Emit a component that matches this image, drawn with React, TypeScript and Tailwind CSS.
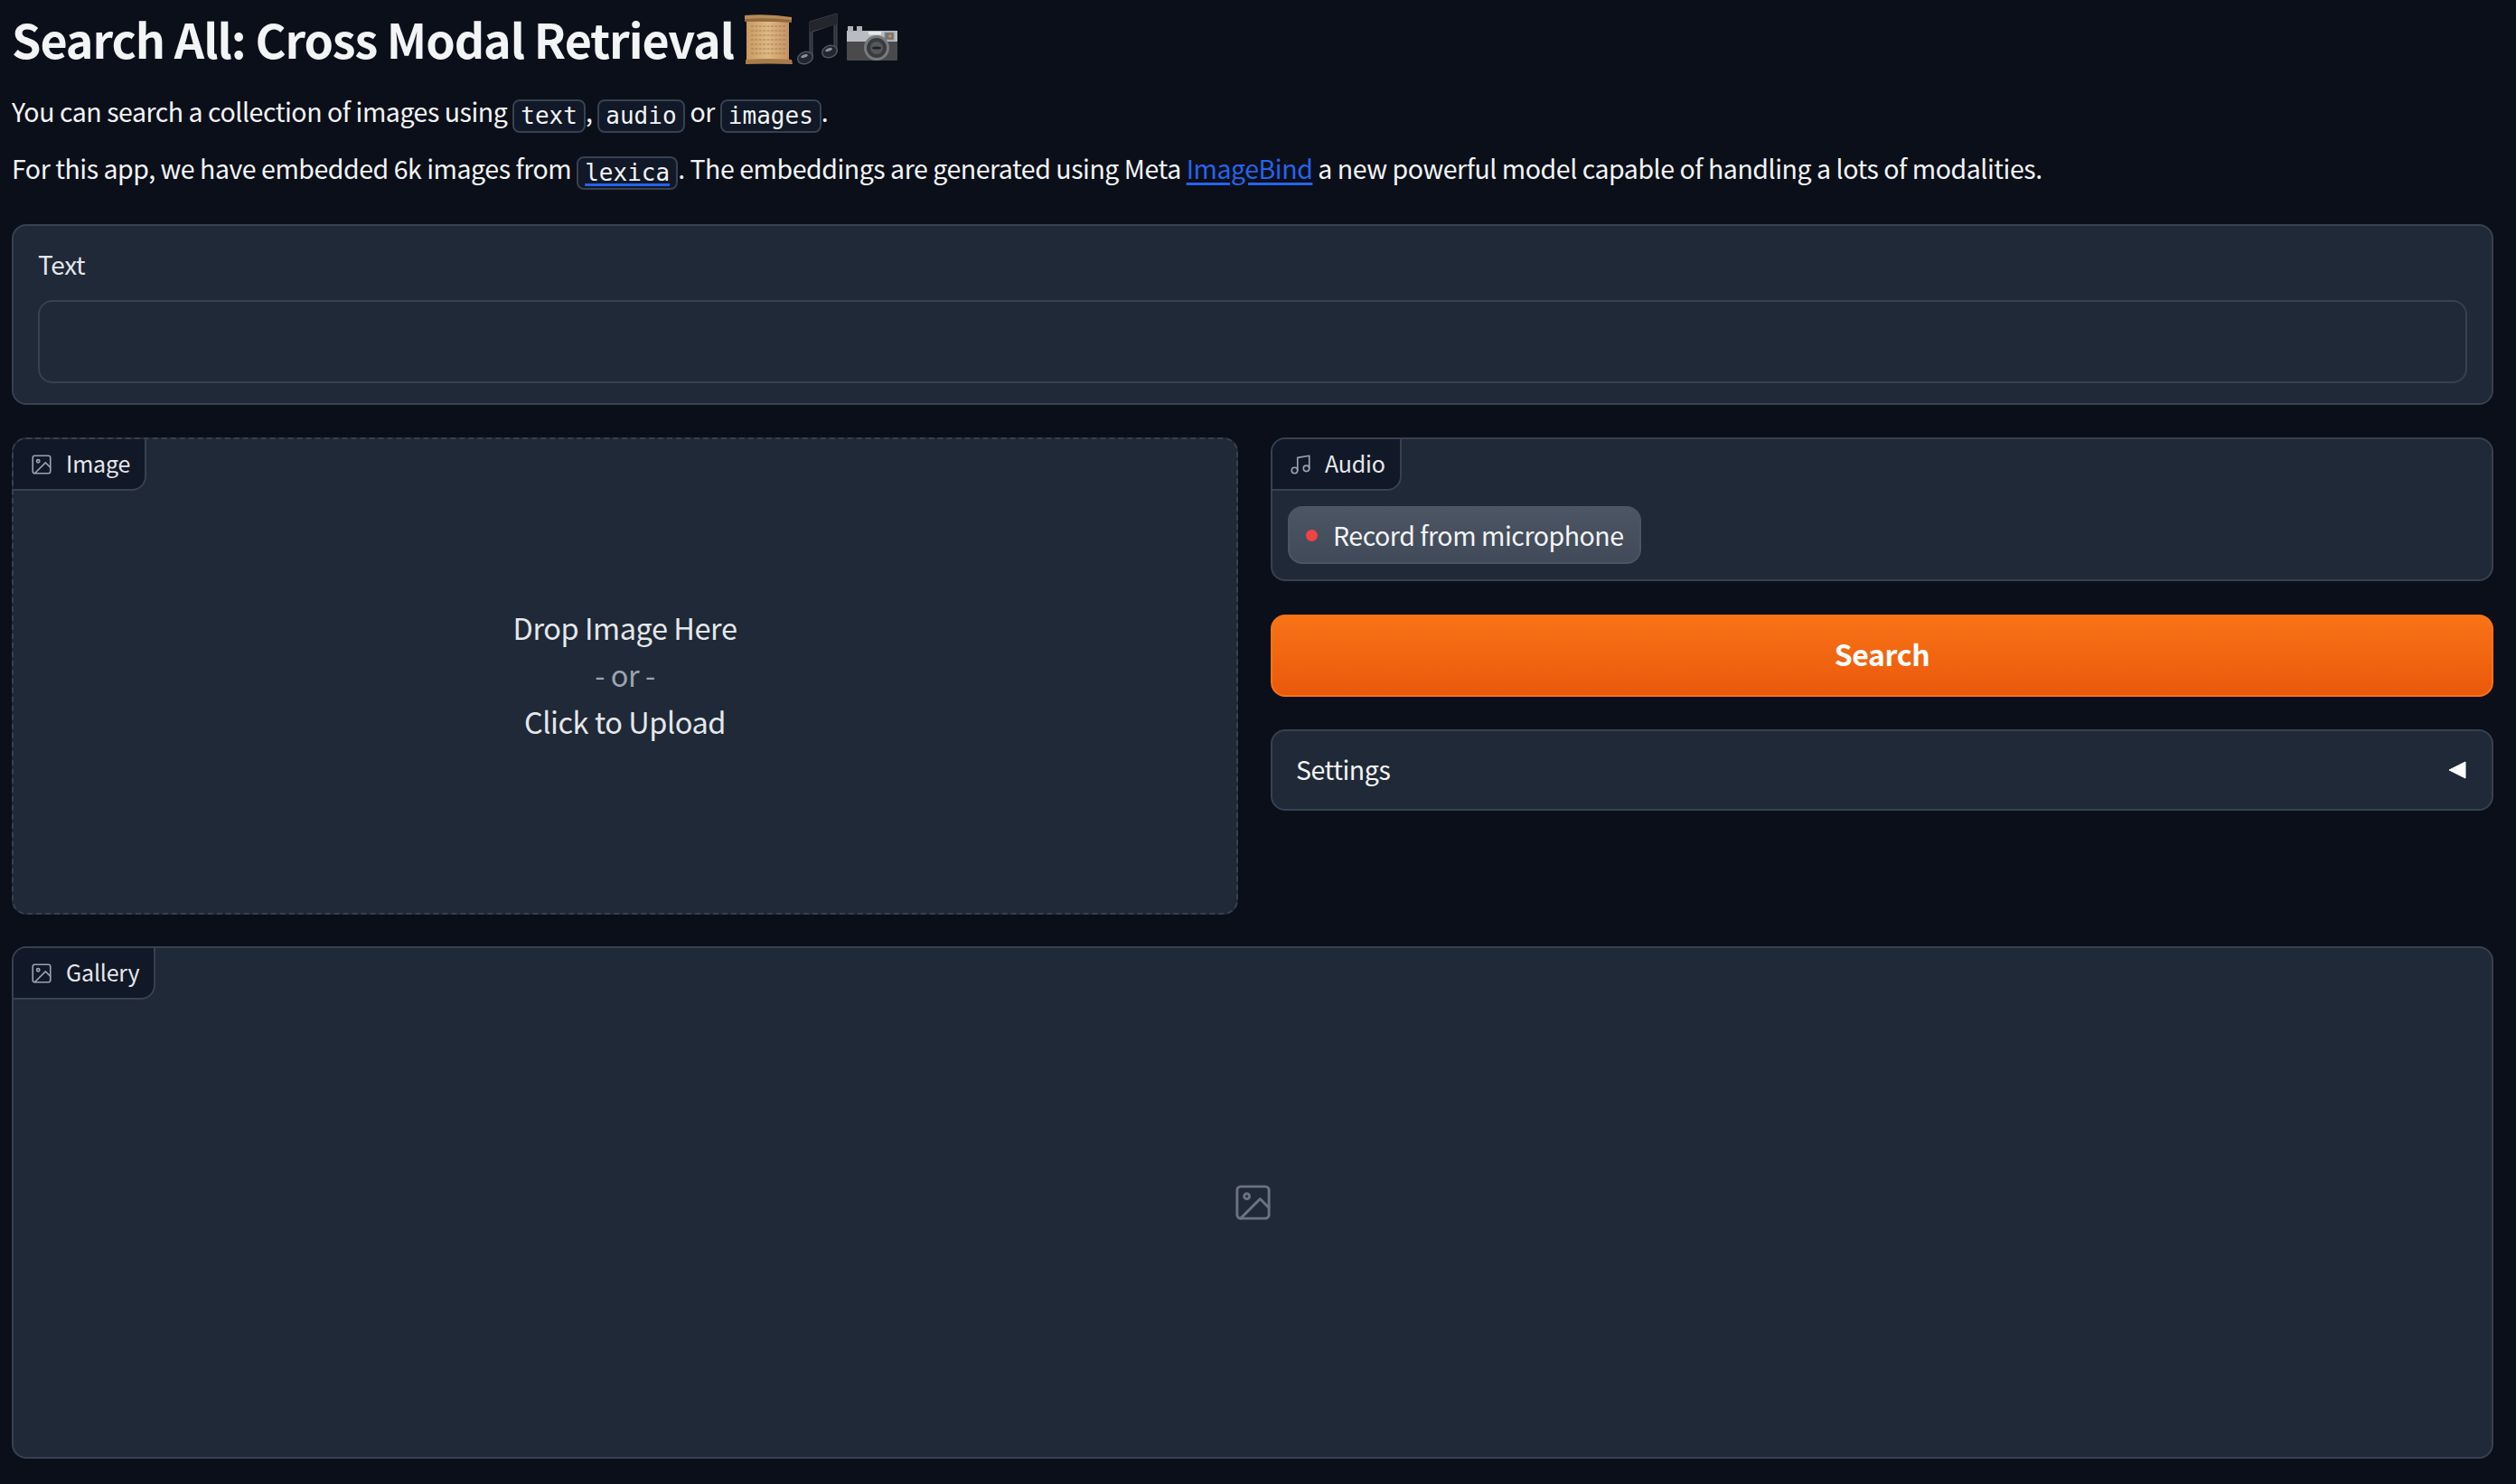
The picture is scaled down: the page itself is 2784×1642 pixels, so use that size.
import React from "react";

const sans = "font-['Noto_Sans_CJK_SC','Noto_Sans',sans-serif]";

function ImageIcon({ className }: { className: string }) {
  return (
    <svg viewBox="0 0 24 24" fill="none" stroke="currentColor" strokeWidth="1.5" strokeLinecap="round" strokeLinejoin="round" className={className}>
      <rect x="3" y="3" width="18" height="18" rx="2" />
      <circle cx="8.5" cy="8.5" r="1.5" />
      <polyline points="21 15 16 10 5 21" />
    </svg>
  );
}

function MusicIcon({ className }: { className: string }) {
  return (
    <svg viewBox="0 0 24 24" fill="none" stroke="currentColor" strokeWidth="1.5" strokeLinecap="round" strokeLinejoin="round" className={className}>
      <path d="M9 18V5l12-2v13" />
      <circle cx="6" cy="18" r="3" />
      <circle cx="18" cy="16" r="3" />
    </svg>
  );
}

function Scroll() {
  return (
    <svg viewBox="0 0 54 58" className="w-[54px] h-[58px] shrink-0">
      <defs>
        <linearGradient id="paper" x1="0" x2="1" y1="0" y2="0">
          <stop offset="0" stopColor="#c89a63" />
          <stop offset="0.5" stopColor="#e0b884" />
          <stop offset="1" stopColor="#c39360" />
        </linearGradient>
      </defs>
      <rect x="3" y="5" width="47" height="49" fill="url(#paper)" />
      <path d="M1 3 Q27 1 53 5 L53 11 Q27 9 1 10 Z" fill="#b98a55" />
      <path d="M1 7 Q27 5 53 8 L53 11 Q27 9 1 10 Z" fill="#8f6a3f" />
      <path d="M2 52 Q27 50 53 52 L54 57 Q27 56 2 57 Z" fill="#a87c4a" />
      <g stroke="#8c6a45" strokeWidth="0.8" strokeDasharray="3 1.4" opacity="0.8">
        <path d="M8 15H46M8 20H46M8 25H47M8 30H46M8 35H47M8 40H46M8 45H46" />
      </g>
    </svg>
  );
}

function Note() {
  return (
    <svg viewBox="0 0 46 58" className="w-[46px] h-[58px] shrink-0">
      <path d="M14 10 L44 1 L44 42 L41 42 L41 13 L17 21 L17 50 L14 50 Z" fill="#2e3038" stroke="#4a4f5c" strokeWidth="1" />
      <path d="M14 10 L44 1 L44 13 L14 21 Z" fill="#25262d" />
      <ellipse cx="9" cy="50" rx="8.5" ry="6.5" fill="#24262d" stroke="#4f5867" strokeWidth="1.4" transform="rotate(-20 9 50)" />
      <ellipse cx="36" cy="43" rx="8.5" ry="6.5" fill="#24262d" stroke="#4f5867" strokeWidth="1.4" transform="rotate(-20 36 43)" />
      <ellipse cx="8" cy="48" rx="4" ry="1.6" fill="#8a8f9a" transform="rotate(-20 8 48)" />
      <ellipse cx="35" cy="41" rx="4" ry="1.6" fill="#8a8f9a" transform="rotate(-20 35 41)" />
    </svg>
  );
}

function Camera() {
  return (
    <svg viewBox="0 0 56 40" className="w-[56px] h-[40px] shrink-0">
      <rect x="0" y="6" width="56" height="33" rx="1.5" fill="#4a4a4c" />
      <rect x="0" y="6" width="56" height="12" fill="#b9bcc0" />
      <rect x="1" y="1" width="6" height="6" fill="#b1b3b7" />
      <rect x="11" y="1" width="6" height="6" fill="#b1b3b7" />
      <rect x="24" y="7" width="14" height="3.5" fill="#e8e8e8" />
      <rect x="42" y="8" width="10" height="8" fill="#6f7376" stroke="#8f9396" />
      <circle cx="33" cy="25" r="14" fill="#767a7f" />
      <circle cx="33" cy="25" r="11" fill="#3a3b3e" />
      <circle cx="33" cy="25" r="7" fill="#55575b" />
      <ellipse cx="33" cy="25" rx="5" ry="1.6" fill="#1f2023" />
      <circle cx="48" cy="12" r="1.8" fill="#e98a2b" />
    </svg>
  );
}

function Code({ children, link }: { children: string; link?: boolean }) {
  return (
    <code className={`inline-block h-[37px] align-[-2px] rounded-lg border-2 border-[#374151] bg-[#111827] px-[7px] font-['DejaVu_Sans_Mono',monospace] text-[26px] leading-[32px] tracking-normal text-[#f3f4f6] ${link ? "underline decoration-[#2563eb] decoration-[3px] underline-offset-[3px]" : ""}`}>
      {children}
    </code>
  );
}

function Tab({ icon, label, width }: { icon: React.ReactNode; label: string; width: string }) {
  return (
    <div className={`flex h-[57px] ${width} items-center gap-[14px] rounded-br-2xl border-r-2 border-b-2 border-[#374151] bg-[#111827] pl-[18px] text-[25px] leading-none tracking-[-0.2px] text-[#e5e7eb]`}>
      {icon}
      <span className="-mt-[2px]">{label}</span>
    </div>
  );
}

export default function App() {
  return (
    <div className={`${sans} min-h-[1642px] bg-[#0b0f19] pl-[13px] pr-[25px] text-[#f3f4f6]`}>
      <header className="h-[248px]">
        <h1 className="flex h-[86px] items-start pt-[14px] text-[52px] font-semibold leading-[72px] tracking-[-1.05px]">
          <span className="mr-[11px] -mt-[7px]">Search All: Cross Modal Retrieval</span>
          <Scroll />
          <span className="ml-[5px]"><Note /></span>
          <span className="ml-[9px] mt-[14px]"><Camera /></span>
        </h1>
        <p className="mt-[15px] text-[28.5px] leading-[44px] tracking-[-0.46px]">
          You can search a collection of images using <Code>text</Code>, <Code>audio</Code> or <Code>images</Code>.
        </p>
        <p className="mt-[17px] text-[28.5px] leading-[44px] tracking-[-0.46px]">
          For this app, we have embedded 6k images from <Code link>lexica</Code>. The embeddings are generated using Meta{" "}
          <a className="text-[#2563eb] underline decoration-[3px] underline-offset-[4px]">ImageBind</a> a new powerful model capable of handling a lots of modalities.
        </p>
      </header>

      <div className="flex flex-col gap-[36px]">
        <section className="h-[200px] rounded-2xl border-2 border-[#374151] bg-[#1f2937] px-[27px] pt-[20px]">
          <div className="h-[62px] text-[28px] leading-[44px] tracking-[-0.4px] text-[#e5e7eb]">Text</div>
          <div className="h-[92px] rounded-2xl border-2 border-[#374151] bg-[#1f2937]" />
        </section>

        <div className="grid h-[528px] grid-cols-[1357px_1353px] gap-[36px]">
          <section className="flex flex-col overflow-hidden rounded-2xl border-2 border-dashed border-[#374151] bg-[#1f2937]">
            <Tab icon={<ImageIcon className="h-[26px] w-[26px] text-[#9ca3af]" />} label="Image" width="w-[147px]" />
            <div className="flex flex-1 flex-col items-center pt-[125px] text-[32.5px] leading-[52px] tracking-[-0.45px] text-[#e5e7eb]">
              <span>Drop Image Here</span>
              <span className="text-[#9ca3af]">- or -</span>
              <span>Click to Upload</span>
            </div>
          </section>

          <div className="flex flex-col">
            <section className="h-[159px] overflow-hidden rounded-2xl border-2 border-[#374151] bg-[#1f2937]">
              <Tab icon={<MusicIcon className="h-[26px] w-[26px] text-[#9ca3af]" />} label="Audio" width="w-[143px]" />
              <button className="ml-[17px] mt-[17px] flex h-[64px] w-[391px] items-center gap-[17px] whitespace-nowrap rounded-2xl border-2 border-[#4b5563] bg-gradient-to-b from-[#4b5563] to-[#414a59] pl-[18px] text-[28.5px] leading-none tracking-[-0.46px] text-[#f3f4f6]">
                <span className="h-[13px] w-[13px] shrink-0 rounded-full bg-[#ef4444]" />
                Record from microphone
              </button>
            </section>
            <button className="mt-[37px] h-[91px] rounded-2xl border-2 border-[#f97316] bg-gradient-to-b from-[#f97316] to-[#ea580c] pb-[5px] text-[32px] font-semibold leading-none tracking-[-0.4px] text-white">
              Search
            </button>
            <section className="mt-[36px] flex h-[90px] items-center justify-between rounded-2xl border-2 border-[#374151] bg-[#1f2937] pl-[26px] pr-[28px] text-[28.5px] leading-none tracking-[-0.46px] text-[#f3f4f6]">
              <span className="-mt-[1px]">Settings</span>
              <svg viewBox="0 0 20 20" className="h-[20px] w-[20px]">
                <path d="M19 1 L19 19 L1 10 Z" fill="#ffffff" stroke="#ffffff" strokeWidth="1" strokeLinejoin="round" />
              </svg>
            </section>
          </div>
        </div>

        <section className="-mt-[1px] flex h-[567px] flex-col overflow-hidden rounded-2xl border-2 border-[#374151] bg-[#1f2937]">
          <Tab icon={<ImageIcon className="h-[26px] w-[26px] text-[#9ca3af]" />} label="Gallery" width="w-[157px]" />
          <div className="flex flex-1 items-center justify-center pb-[57px]">
            <ImageIcon className="h-[47px] w-[47px] text-[#6b7280]" />
          </div>
        </section>
      </div>
    </div>
  );
}
